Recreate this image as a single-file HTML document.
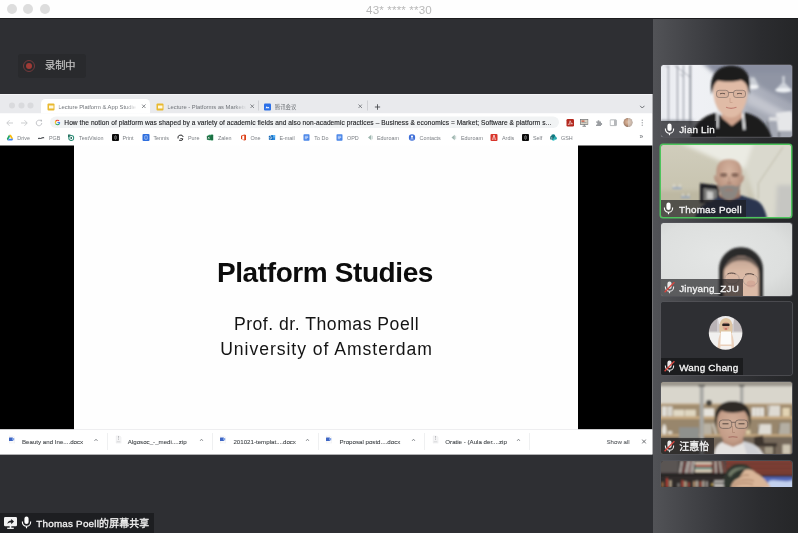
<!DOCTYPE html>
<html lang="zh">
<head>
<meta charset="utf-8">
<title>Meeting</title>
<style>
html,body{margin:0;padding:0;}
body{width:798px;height:533px;overflow:hidden;position:relative;background:#2e2f33;font-family:"Liberation Sans","Noto Sans CJK SC",sans-serif;}
#root{position:absolute;left:0;top:0;width:798px;height:533px;will-change:transform;}
.abs{position:absolute;}
#titlebar{left:0;top:0;width:798px;height:18px;background:#fefefe;border-bottom:1px solid #1c1c1e;box-sizing:content-box;}
#titlebar .dot{position:absolute;top:4px;width:10px;height:10px;border-radius:50%;background:#dddddd;}
#titletext{left:0;width:798px;top:3px;text-align:center;font-size:11.6px;line-height:13px;color:#b9b9b9;letter-spacing:0.15px;}
#main{left:0;top:19px;width:652.5px;height:514px;background:#2e2f33;}
#panel{left:652.5px;top:19px;width:145.5px;height:514px;background:linear-gradient(to right,#525357 0%,#434448 25%,#35363a 50%,#2b2c2f 75%,#252628 100%);}
#rec{left:17.5px;top:53.5px;width:68.5px;height:24px;border-radius:3px;background:#292a2d;}
#rec .ring{position:absolute;left:5.5px;top:6.4px;width:10px;height:10px;border-radius:50%;border:1px solid #74393b;}
#rec .ring i{position:absolute;left:1.8px;top:1.8px;width:6.4px;height:6.4px;border-radius:50%;background:#a03b36;}
#rec span{position:absolute;left:27.5px;top:5px;font-size:10.2px;line-height:14px;color:#c4c4c4;white-space:nowrap;-webkit-text-stroke:0.2px #c4c4c4;}

/* chrome window : authored at 2x then scaled */
#chrome{left:0;top:94px;width:1305px;height:721px;transform:scale(.5);transform-origin:0 0;background:#fff;overflow:hidden;font-family:"Liberation Sans","Noto Sans CJK SC",sans-serif;}
#chrome .tabstrip,#chrome .toolbar,#chrome .bm,#chrome .dl{filter:blur(0.55px);}
#chrome .tabstrip{position:absolute;left:0;top:0;width:1305px;height:39px;background:linear-gradient(#f4f4f6 0,#f4f4f6 2px,#e9eaed 2px);}
#chrome .tl{position:absolute;top:17px;width:12px;height:12px;border-radius:50%;background:#d9dadd;}
#chrome .tab{position:absolute;top:10px;height:29px;}
#chrome .tab.active{background:#fff;border-radius:9px 9px 0 0;}
#chrome .tab .fav{position:absolute;top:9px;left:13px;width:14px;height:14px;border-radius:2px;}
#chrome .tab .tt{position:absolute;top:8px;left:34.6px;font-size:11.6px;line-height:16px;color:#6f7378;white-space:nowrap;overflow:hidden;}
#chrome .tab .tt.fade{-webkit-mask-image:linear-gradient(to right,#000 0,#000 84%,transparent 100%);mask-image:linear-gradient(to right,#000 0,#000 84%,transparent 100%);}
#chrome .tab .x{position:absolute;top:8px;font-size:15px;line-height:16px;color:#5f6368;}
#chrome .toolbar{position:absolute;left:0;top:39px;width:1305px;height:33px;background:#fff;}
#chrome .omni{position:absolute;left:100px;top:6px;width:1018px;height:23px;border-radius:12px;background:#f1f3f4;}
#chrome .omni .url{position:absolute;left:28.6px;top:4px;font-size:13.2px;line-height:17px;color:#202124;white-space:nowrap;letter-spacing:0.14px;-webkit-text-stroke:0.22px #202124;}
#chrome .bm{position:absolute;left:0;top:72px;width:1305px;height:31px;background:#fff;}
#chrome .bm .b{position:absolute;top:7px;height:16px;font-size:10.8px;line-height:16px;color:#7a7e83;white-space:nowrap;}
#chrome .bm .ic{position:absolute;top:8px;width:14px;height:14px;border-radius:2px;}
#chrome .content{position:absolute;left:0;top:103px;width:1305px;height:568px;background:linear-gradient(to right,#000 0,#000 149px,#fefefe 149px,#fefefe 1156px,#000 1156px,#000 100%);}
#chrome .slide{position:absolute;left:149px;top:0;width:1007px;height:568px;background:#fefefe;}
#chrome .dl{position:absolute;left:0;top:671px;width:1305px;height:50px;background:#fff;border-top:1px solid #dcdde0;box-sizing:border-box;}
#chrome .dl .t{position:absolute;top:15px;font-size:12.3px;line-height:16px;color:#3f4347;-webkit-text-stroke:0.15px #3f4347;white-space:nowrap;}
#chrome .dl .sep{position:absolute;top:6px;width:1px;height:34px;background:#dfe0e3;}
#chrome .dl .car{position:absolute;top:16px;width:8px;height:8px;}
#chrome .dl .fi{position:absolute;top:11px;width:12px;height:16px;}

.h1{left:73.5px;width:503px;top:255px;text-align:center;font-weight:bold;font-size:28px;line-height:36px;color:#0c0c0c;letter-spacing:-0.4px;white-space:nowrap;}
.h2{left:75px;width:503px;text-align:center;font-size:17.6px;line-height:24px;color:#141414;white-space:nowrap;}

#share{left:0;top:513px;width:153.5px;height:20px;background:#1d1e21;}
#share span{position:absolute;left:36.3px;top:2.8px;font-size:9.9px;line-height:15px;letter-spacing:0.2px;color:#f2f2f2;white-space:nowrap;-webkit-text-stroke:0.3px #f2f2f2;}

.tile{position:absolute;left:661px;width:130.6px;height:72.6px;border-radius:2.5px;overflow:hidden;background:#303135;box-shadow:0 0 0 0.8px #55565b;}
.tile svg.ph{position:absolute;left:0;top:0;width:131px;height:73px;display:block;}
.tile .lab{position:absolute;left:0;bottom:0;height:16.2px;background:rgba(28,28,30,.66);}
.tile .lab span{position:absolute;left:18.2px;top:1.2px;font-size:9.9px;line-height:15px;letter-spacing:0.2px;color:#f6f6f6;white-space:nowrap;-webkit-text-stroke:0.3px #f6f6f6;}
.tile .lab svg{position:absolute;left:2.6px;top:2px;width:11px;height:13px;}
</style>
</head>
<body>
<div id="root">
<div id="titlebar" class="abs">
  <div class="dot" style="left:6.7px"></div><div class="dot" style="left:23.3px"></div><div class="dot" style="left:40px"></div>
</div>
<div id="titletext" class="abs">43* **** **30</div>
<div id="main" class="abs"></div>
<div id="panel" class="abs"></div>

<div id="rec" class="abs"><div class="ring"><i></i></div><span>录制中</span></div>

<!-- CHROME -->
<div id="chrome" class="abs">
  <div class="tabstrip">
    <div class="tl" style="left:18px"></div><div class="tl" style="left:37px"></div><div class="tl" style="left:55px"></div>
    <div class="tab active" style="left:82px;width:218px"><div class="fav" style="background:#e9b92e"><div style="position:absolute;left:2.5px;top:4px;width:9px;height:6px;background:#fff8e0"></div></div><div class="tt fade" style="width:158px">Lecture Platform &amp; App Studie</div><svg style="position:absolute;left:201px;top:9.5px;width:9px;height:9px" viewBox="0 0 10 10"><path d="M1 1L9 9M9 1L1 9" stroke="#5f6368" stroke-width="1.6" fill="none"/></svg></div>
    <div class="tab" style="left:300px;width:217px"><div class="fav" style="background:#e9b92e"><div style="position:absolute;left:2.5px;top:4px;width:9px;height:6px;background:#fff8e0"></div></div><div class="tt fade" style="width:158px">Lecture - Platforms as Markets</div><svg style="position:absolute;left:199.5px;top:9.5px;width:9px;height:9px" viewBox="0 0 10 10"><path d="M1 1L9 9M9 1L1 9" stroke="#5f6368" stroke-width="1.6" fill="none"/></svg></div>
    <div style="position:absolute;left:517px;top:13px;width:1px;height:20px;background:#b5b7bb"></div>
    <div class="tab" style="left:517px;width:217px"><div class="fav" style="background:#2a6fe8;left:11px"><svg viewBox="0 0 14 14" style="position:absolute;left:0;top:0;width:14px;height:14px"><path d="M3 9.5L5.5 5.5L7.5 8L9 6.5L11 9.5Z" fill="#fff"/></svg></div><div class="tt" style="left:32.5px;font-size:10.8px">腾讯会议</div><svg style="position:absolute;left:199px;top:9.5px;width:9px;height:9px" viewBox="0 0 10 10"><path d="M1 1L9 9M9 1L1 9" stroke="#5f6368" stroke-width="1.6" fill="none"/></svg></div>
    <div style="position:absolute;left:734px;top:13px;width:1px;height:20px;background:#b5b7bb"></div>
    <svg style="position:absolute;left:749px;top:20px;width:12px;height:12px" viewBox="0 0 12 12"><path d="M6 0.5V11.5M0.5 6H11.5" stroke="#4a4d51" stroke-width="1.8" fill="none"/></svg>
    <svg style="position:absolute;left:1279px;top:22px;width:11px;height:8px" viewBox="0 0 11 8"><path d="M1 1.5L5.5 6L10 1.5" stroke="#5f6368" stroke-width="1.8" fill="none"/></svg>
  </div>
  <div class="toolbar">
    <svg style="position:absolute;left:12px;top:12px;width:15px;height:14px" viewBox="0 0 15 14"><path d="M14 7H2M7 1.5L1.5 7L7 12.5" stroke="#c3c5c8" stroke-width="1.7" fill="none"/></svg>
    <svg style="position:absolute;left:41px;top:12px;width:15px;height:14px" viewBox="0 0 15 14"><path d="M1 7H13M8 1.5L13.5 7L8 12.5" stroke="#c3c5c8" stroke-width="1.7" fill="none"/></svg>
    <svg style="position:absolute;left:70px;top:11px;width:16px;height:16px" viewBox="0 0 16 16"><path d="M13.5 8A5.5 5.5 0 1 1 11.6 3.8" stroke="#b9bbbf" stroke-width="1.7" fill="none"/><path d="M9.5 1.5H14V6Z" fill="#b9bbbf"/></svg>
    <div class="omni"><svg style="position:absolute;left:9px;top:5.5px;width:12px;height:12px" viewBox="0 0 12 12"><circle cx="6" cy="6" r="4.4" fill="none" stroke="#ea4335" stroke-width="2.2" stroke-dasharray="7.2 30" transform="rotate(-150 6 6)"/><circle cx="6" cy="6" r="4.4" fill="none" stroke="#fbbc05" stroke-width="2.2" stroke-dasharray="5.5 30" transform="rotate(150 6 6)"/><circle cx="6" cy="6" r="4.4" fill="none" stroke="#34a853" stroke-width="2.2" stroke-dasharray="7.5 30" transform="rotate(40 6 6)"/><path d="M6 5H10.9V7.2H6Z" fill="#4285f4"/><circle cx="6" cy="6" r="4.4" fill="none" stroke="#4285f4" stroke-width="2.2" stroke-dasharray="4 30" transform="rotate(-10 6 6)"/></svg><div class="url">How the notion of platform was shaped by a variety of academic fields and also non-academic practices – Business &amp; economics = Market; Software &amp; platform s...</div></div>
    <div style="position:absolute;left:1133px;top:11px;width:15px;height:15px;border-radius:2.5px;background:#b4291f"><svg viewBox="0 0 15 15" style="position:absolute;left:0;top:0;width:15px;height:15px"><path d="M3.5 11C5.5 9.5 7 6.5 7.2 3.5C7.6 6.5 9.5 9 12 9.5C9 9.3 5.5 10 3.5 11Z" stroke="#fff" stroke-width="1.2" fill="none"/></svg></div>
    <svg style="position:absolute;left:1160px;top:10px;width:17px;height:17px" viewBox="0 0 17 17"><rect x="1" y="2" width="15" height="10" fill="#d9d3c5" stroke="#6f7174" stroke-width="1.4"/><rect x="3" y="4" width="6" height="2.5" fill="#c9563f"/><rect x="3" y="7.5" width="10" height="1.2" fill="#8a8c8f"/><path d="M8.5 12V15M5 15.5H12" stroke="#5f6164" stroke-width="1.5"/></svg>
    <svg style="position:absolute;left:1190px;top:11px;width:15px;height:15px" viewBox="0 0 15 15"><path d="M2 5H5.2A1.9 1.9 0 1 1 8.8 5H12V8.2A1.9 1.9 0 1 1 12 11.8V14H2V11A1.9 1.9 0 1 0 2 7.5Z" fill="#9a9da1"/></svg>
    <svg style="position:absolute;left:1219px;top:11px;width:15px;height:15px" viewBox="0 0 15 15"><rect x="1.2" y="1.7" width="12.6" height="11.6" rx="1" fill="#fff" stroke="#9a9da1" stroke-width="1.5"/><rect x="9" y="2" width="4.5" height="11" fill="#b5b7ba"/></svg>
    <div style="position:absolute;left:1247px;top:9px;width:18px;height:18px;border-radius:50%;background:radial-gradient(circle at 45% 45%,#d9b9a0 0,#c79d82 35%,#8b6f5e 70%,#6b5a50 100%);overflow:hidden"><div style="position:absolute;left:9px;top:0;width:9px;height:18px;background:rgba(230,225,220,.55)"></div></div>
    <svg style="position:absolute;left:1282px;top:11px;width:5px;height:15px" viewBox="0 0 5 15"><circle cx="2.5" cy="2.5" r="1.4" fill="#a0a3a7"/><circle cx="2.5" cy="7.5" r="1.4" fill="#a0a3a7"/><circle cx="2.5" cy="12.5" r="1.4" fill="#a0a3a7"/></svg>
  </div>
  <div class="bm">
    <svg class="ic" style="left:13px;width:14px;height:14px;border-radius:0" viewBox="0 0 14 14"><path d="M5 1.5H9L13.5 9.5H9.5Z" fill="#fbbc05"/><path d="M5 1.5L0.5 9.5L2.5 12.8L7 5Z" fill="#1fa463"/><path d="M4.6 9.5H13.5L11.5 12.8H2.5Z" fill="#4285f4"/></svg><div class="b" style="left:34.6px">Drive</div>
    <svg class="ic" style="left:75px;width:14px;height:14px;border-radius:0" viewBox="0 0 14 14"><path d="M1 8.5C3 6 5 9 7 7.5S11 5.5 13.5 6.5V9C11 8 9 9.5 7 10S3 9 1 10.5Z" fill="#55585c"/></svg><div class="b" style="left:97.8px">PGB</div>
    <svg class="ic" style="left:134.5px;width:14px;height:14px;border-radius:0" viewBox="0 0 14 14"><circle cx="7.5" cy="8" r="5" fill="none" stroke="#2c8f78" stroke-width="2.2"/><circle cx="7.5" cy="8" r="1.8" fill="#1e5f52"/><path d="M1 1H6V3.5H3.5V6H1Z" fill="#256e5e"/></svg><div class="b" style="left:158px">TestVision</div>
    <div class="ic" style="left:224px;background:#0b0b0b"><div style="position:absolute;left:5px;top:3px;width:4px;height:8px;border:1px solid #ddd;border-radius:2px;box-sizing:border-box"></div></div><div class="b" style="left:245px">Print</div>
    <div class="ic" style="left:284.8px;background:#2f6fde"><div style="position:absolute;left:4px;top:3px;width:6px;height:8px;border:1.3px solid #e8f0ff;box-sizing:border-box;border-radius:1px"></div></div><div class="b" style="left:306.8px">Tennis</div>
    <svg class="ic" style="left:354px;width:14px;height:14px;border-radius:0" viewBox="0 0 14 14"><path d="M2 9A5.2 5.2 0 0 1 12.5 6" stroke="#2b2c2e" stroke-width="2" fill="none"/><path d="M4 11.5A4 4 0 0 0 11.5 9.5H6.5" stroke="#2b2c2e" stroke-width="2" fill="none"/></svg><div class="b" style="left:376px">Pure</div>
    <svg class="ic" style="left:413px;width:14px;height:14px;border-radius:0" viewBox="0 0 14 14"><rect x="4" y="1.5" width="9.5" height="11" rx="1" fill="#2e9e62"/><rect x="9" y="1.5" width="4.5" height="11" fill="#1d7044"/><rect x="0.5" y="3.5" width="8" height="8" rx="1" fill="#17683d"/><path d="M2.8 5.5L6.2 9.7M6.2 5.5L2.8 9.7" stroke="#fff" stroke-width="1.2"/></svg><div class="b" style="left:436px">Zalen</div>
    <svg class="ic" style="left:479.5px;width:13px;height:14px;border-radius:0" viewBox="0 0 13 14"><path d="M2 3.5L8.5 1L12 2V12L8.5 13L2 10.5L8.5 11.3V3L4.5 4V9.3L2 10.5Z" fill="#dc3e15"/></svg><div class="b" style="left:500.8px">One</div>
    <svg class="ic" style="left:536.5px;width:14px;height:14px;border-radius:0" viewBox="0 0 14 14"><rect x="5" y="2" width="8.5" height="10" rx="1" fill="#2a8ae0"/><rect x="9" y="2" width="4.5" height="5" fill="#5db3f5"/><rect x="0.5" y="3.5" width="8" height="8" rx="1" fill="#0f64b5"/><circle cx="4.5" cy="7.5" r="2.1" fill="none" stroke="#fff" stroke-width="1.2"/></svg><div class="b" style="left:558.8px">E-mail</div>
    <svg class="ic" style="left:606px;width:14px;height:14px;border-radius:0" viewBox="0 0 14 14"><rect x="1" y="0.5" width="12" height="13" rx="1.6" fill="#4a86e8"/><path d="M3.6 4.6H10.4M3.6 7H10.4M3.6 9.4H8.4" stroke="#e8f0fe" stroke-width="1.3"/></svg><div class="b" style="left:628.6px">To Do</div>
    <svg class="ic" style="left:672px;width:14px;height:14px;border-radius:0" viewBox="0 0 14 14"><rect x="1" y="0.5" width="12" height="13" rx="1.6" fill="#4a86e8"/><path d="M3.6 4.6H10.4M3.6 7H10.4M3.6 9.4H8.4" stroke="#e8f0fe" stroke-width="1.3"/></svg><div class="b" style="left:694px">OPD</div>
    <svg class="ic" style="left:734px;width:12px;height:14px;border-radius:0" viewBox="0 0 12 14"><path d="M8.5 1.5L2 7L8.5 12.5Z" fill="#9fb7b0"/><path d="M10.5 3.5V10.5" stroke="#b8cac5" stroke-width="1.6"/></svg><div class="b" style="left:754px">Eduroam</div>
    <svg class="ic" style="left:817px;width:14px;height:14px;border-radius:0" viewBox="0 0 14 14"><circle cx="7" cy="7" r="6.5" fill="#3f6fd8"/><circle cx="7" cy="5.3" r="2.1" fill="#fff"/><path d="M3 10.6C3.8 8.4 10.2 8.4 11 10.6Z" fill="#fff"/></svg><div class="b" style="left:839px">Contacts</div>
    <svg class="ic" style="left:900.5px;width:12px;height:14px;border-radius:0" viewBox="0 0 12 14"><path d="M8.5 1.5L2 7L8.5 12.5Z" fill="#9fb7b0"/><path d="M10.5 3.5V10.5" stroke="#b8cac5" stroke-width="1.6"/></svg><div class="b" style="left:922px">Eduroam</div>
    <div class="ic" style="left:981.4px;background:#d8352b"><svg viewBox="0 0 14 14" style="position:absolute;left:0;top:0;width:14px;height:14px"><path d="M3.5 12L7 2L10.5 12M7 2V12" stroke="#fff" stroke-width="1.1" fill="none"/></svg></div><div class="b" style="left:1004px">Ardis</div>
    <div class="ic" style="left:1043.6px;background:#0b0b0b"><div style="position:absolute;left:5px;top:3px;width:4px;height:8px;border:1px solid #ddd;border-radius:2px;box-sizing:border-box"></div></div><div class="b" style="left:1066px">Self</div>
    <svg class="ic" style="left:1099.5px;width:14px;height:14px;border-radius:0" viewBox="0 0 14 14"><circle cx="6.5" cy="4.8" r="4.3" fill="#0f7c84"/><circle cx="10.3" cy="8.3" r="3.4" fill="#2aa7ad"/><circle cx="6.8" cy="10.8" r="2.8" fill="#3cc6c9"/><rect x="0.5" y="4.5" width="6.5" height="6.5" rx="1" fill="#08626a"/><path d="M5 6.3H3.3C2.4 6.3 2.4 7.7 3.3 7.7H4.2C5.1 7.7 5.1 9.2 4.2 9.2H2.4" stroke="#fff" stroke-width="0.9" fill="none"/></svg><div class="b" style="left:1122px">GSH</div>
    <div class="b" style="left:1279px;color:#5f6368;font-size:13px;top:6px">»</div>
  </div>
  <div class="content"></div>
  <div class="dl">
    <svg class="fi" style="left:18px" viewBox="0 0 12 16"><path d="M1 0.5H8L11.5 4V15.5H1Z" fill="#fbfbfc" stroke="#e3e4e7" stroke-width="0.8"/><rect x="0" y="4" width="8" height="7" rx="1" fill="#3e66c4"/><rect x="6" y="5.2" width="4.5" height="4.6" fill="#7fa1e6"/></svg><div class="t" style="left:44px">Beauty and Ine....docx</div><svg class="car" style="left:188px" viewBox="0 0 10 8"><path d="M1 6.5L5 2L9 6.5" stroke="#5f6368" stroke-width="1.7" fill="none"/></svg><div class="sep" style="left:214.6px"></div>
    <svg class="fi" style="left:231px" viewBox="0 0 12 16"><path d="M1 0.5H8L11.5 4V15.5H1Z" fill="#f4f4f5" stroke="#e0e1e4" stroke-width="0.8"/><path d="M6 1V9" stroke="#9a9ca0" stroke-width="1.6" stroke-dasharray="1.6 1.2"/><rect x="2.5" y="12" width="7" height="1.4" fill="#c9cacd"/></svg><div class="t" style="left:255.6px">Algosoc_-_medi....zip</div><svg class="car" style="left:399px" viewBox="0 0 10 8"><path d="M1 6.5L5 2L9 6.5" stroke="#5f6368" stroke-width="1.7" fill="none"/></svg><div class="sep" style="left:425.2px"></div>
    <svg class="fi" style="left:440px" viewBox="0 0 12 16"><path d="M1 0.5H8L11.5 4V15.5H1Z" fill="#fbfbfc" stroke="#e3e4e7" stroke-width="0.8"/><rect x="0" y="4" width="8" height="7" rx="1" fill="#3e66c4"/><rect x="6" y="5.2" width="4.5" height="4.6" fill="#7fa1e6"/></svg><div class="t" style="left:466.8px">201021-templat....docx</div><svg class="car" style="left:610.6px" viewBox="0 0 10 8"><path d="M1 6.5L5 2L9 6.5" stroke="#5f6368" stroke-width="1.7" fill="none"/></svg><div class="sep" style="left:637.2px"></div>
    <svg class="fi" style="left:652px" viewBox="0 0 12 16"><path d="M1 0.5H8L11.5 4V15.5H1Z" fill="#fbfbfc" stroke="#e3e4e7" stroke-width="0.8"/><rect x="0" y="4" width="8" height="7" rx="1" fill="#3e66c4"/><rect x="6" y="5.2" width="4.5" height="4.6" fill="#7fa1e6"/></svg><div class="t" style="left:679px">Proposal postd....docx</div><svg class="car" style="left:823px" viewBox="0 0 10 8"><path d="M1 6.5L5 2L9 6.5" stroke="#5f6368" stroke-width="1.7" fill="none"/></svg><div class="sep" style="left:849px"></div>
    <svg class="fi" style="left:865px" viewBox="0 0 12 16"><path d="M1 0.5H8L11.5 4V15.5H1Z" fill="#f4f4f5" stroke="#e0e1e4" stroke-width="0.8"/><path d="M6 1V9" stroke="#9a9ca0" stroke-width="1.6" stroke-dasharray="1.6 1.2"/><rect x="2.5" y="12" width="7" height="1.4" fill="#c9cacd"/></svg><div class="t" style="left:890.6px">Oratie - (Aula der....zip</div><svg class="car" style="left:1033.4px" viewBox="0 0 10 8"><path d="M1 6.5L5 2L9 6.5" stroke="#5f6368" stroke-width="1.7" fill="none"/></svg><div class="sep" style="left:1059.2px"></div>
    <div class="t" style="left:1213px;color:#6a6d71">Show all</div>
    <svg style="position:absolute;left:1283px;top:17.5px;width:10px;height:10px" viewBox="0 0 10 10"><path d="M1 1L9 9M9 1L1 9" stroke="#55585c" stroke-width="1.7" fill="none"/></svg>
  </div>
</div>

<div class="abs h1">Platform Studies</div>
<div class="abs h2" style="top:312px;letter-spacing:0.52px">Prof. dr. Thomas Poell</div>
<div class="abs h2" style="top:337px;letter-spacing:0.96px">University of Amsterdam</div>

<div id="share" class="abs">
  <svg style="position:absolute;left:3.8px;top:3.6px;width:13px;height:12px" viewBox="0 0 13 12"><rect x="0" y="0" width="13" height="9.2" rx="1.2" fill="#f2f2f2"/><path d="M3.4 7C3.8 4.6 5.4 3.6 7.2 3.6V2L10 4.6L7.2 7.2V5.6C5.6 5.5 4.4 5.9 3.4 7Z" fill="#1d1e21"/><path d="M3.2 11.3H9.8" stroke="#f2f2f2" stroke-width="1.3"/><path d="M6.5 9V11" stroke="#f2f2f2" stroke-width="1.6"/></svg>
  <svg style="position:absolute;left:20.6px;top:3px;width:11px;height:13px" viewBox="0 0 11 13"><rect x="3.4" y="0.6" width="4.2" height="7.4" rx="2.1" fill="#fff"/><path d="M1.4 5.6V6.2A4.1 4.1 0 0 0 9.6 6.2V5.6" stroke="#fff" stroke-width="1.1" fill="none"/><path d="M5.5 10.3V12.3" stroke="#fff" stroke-width="1.2"/></svg>
  <span>Thomas Poell的屏幕共享</span>
</div>

<div class="tile" style="top:64.5px;"><svg class="ph" viewBox="0 0 131 73" preserveAspectRatio="none">
<defs><filter id="b1" x="-5%" y="-5%" width="110%" height="110%"><feGaussianBlur stdDeviation="0.9"/></filter>
<filter id="b2" x="-10%" y="-10%" width="120%" height="120%"><feGaussianBlur stdDeviation="2"/></filter>
<filter id="b3" x="-5%" y="-5%" width="110%" height="110%"><feGaussianBlur stdDeviation="0.5"/></filter>
<linearGradient id="w1" x1="0" y1="0" x2="1" y2="0"><stop offset="0" stop-color="#e9ebf0"/><stop offset=".2" stop-color="#f0f1f5"/><stop offset=".42" stop-color="#eef0f3"/><stop offset=".55" stop-color="#b4b8c3"/><stop offset="1" stop-color="#a3a7b4"/></linearGradient></defs>
<rect width="131" height="73" fill="url(#w1)"/>
<g filter="url(#b2)">
<path d="M40 -3H134V10L90 12L54 9Z" fill="#8a8fa0"/>
<path d="M86 8H134V40L100 22Z" fill="#9095a4"/>
<path d="M86 26L134 52V62L86 38Z" fill="#c2c5ce"/>
<path d="M86 42L134 64V76H86Z" fill="#a4a8b3"/>
<path d="M-3 56H34V76H-3Z" fill="#b6b9c1"/>
</g>
<g filter="url(#b1)">
<rect x="6.9" y="0" width="1" height="58" fill="#8a8e98"/><rect x="15.9" y="0" width="1" height="58" fill="#8a8e98"/><rect x="22" y="0" width="1" height="58" fill="#9095a0"/><rect x="28.6" y="0" width="1.5" height="60" fill="#7c808a"/><path d="M4 0L8 3M13 0L29 12M19 9L23 12" stroke="#7c808a" stroke-width="0.6" fill="none"/>

<rect x="0" y="55.5" width="31" height="1.5" fill="#858993"/>
<path d="M90 12.5L86 21H97.5L93.5 12.5Z" fill="#c9cdd4"/><ellipse cx="91.7" cy="22" rx="6" ry="2.2" fill="#f1f3f5"/>
<rect x="121.3" y="11" width="2.4" height="9" fill="#cfd3da"/><path d="M121 18L114 25H131L124 18Z" fill="#cdd2d9"/><ellipse cx="122.5" cy="25.3" rx="8.3" ry="2.2" fill="#eef1f4"/>
<path d="M115 48L130 46L131 48V66H117Z" fill="#e6e7e9"/><path d="M108 52H118V56H108Z" fill="#dcdde0"/>
<path d="M106 56L110 73M118 66V73" stroke="#55575e" stroke-width="1"/>
<!-- body -->
<path d="M29 73C34 58 41 51 56 47.5L70 60L84 47.5C98 51 106 58 111 73Z" fill="#1b1c1f"/>
<path d="M55.3 47.5L57.6 47L57.4 63.5L55.5 62.5Z" fill="#ecedef"/><path d="M80.6 48L83 48.5L84.5 64.5L82.4 65Z" fill="#ecedef"/>
<!-- neck + face -->
<path d="M61 44H81V53L71 61L61 53Z" fill="#cfa38d"/>
<path d="M52.5 27C52 14 58 10 70 10S87 14 86.5 27C86.5 40 80 52.5 70 52.5S52.5 40 52.5 27Z" fill="#e0bba6"/>
<path d="M51 30C47 10 57 0.8 70 0.8C84 0.8 92 10 88 30C87.5 22 85 17 80 15C74 17 62 17 57 15.5C53 18 52 23 51 30Z" fill="#1a1a1d"/>
</g>
<g filter="url(#b3)" opacity=".8">
<rect x="55.5" y="25.3" width="12" height="7.2" rx="2.6" fill="#d6b19d" stroke="#6b5d59" stroke-width="0.7"/><rect x="72.5" y="25.3" width="12" height="7.2" rx="2.6" fill="#d6b19d" stroke="#6b5d59" stroke-width="0.7"/>
<path d="M67.5 27.5H72.5" stroke="#5e514e" stroke-width="0.8"/>
<path d="M59 28.9C60.5 28.2 62.5 28.2 64 28.9M76 28.9C77.5 28.2 79.5 28.2 81 28.9" stroke="#3a2f2d" stroke-width="1" fill="none"/>
<path d="M65 42.3C68 43.6 72 43.6 75.5 42.3" stroke="#b97368" stroke-width="1.1" fill="none"/>
<path d="M69 33V37.5H71.5" stroke="#c39a86" stroke-width="0.8" fill="none"/>
</g>
</svg><div class="lab" style="width:55px;"><svg viewBox="0 0 11 13"><rect x="3.4" y="0.6" width="4.2" height="7.4" rx="2.1" fill="#fff"/><path d="M1.4 5.6V6.2A4.1 4.1 0 0 0 9.6 6.2V5.6" stroke="#fff" stroke-width="1.1" fill="none"/><path d="M5.5 10.3V12.3" stroke="#fff" stroke-width="1.2"/></svg><span>Jian Lin</span></div></div>
<div class="tile" style="top:144.6px;box-shadow:0 0 0 1.5px #4dc45c;border-radius:2px;left:660.9px;width:130.1px;height:72px;"><svg class="ph" viewBox="0 0 131 73" preserveAspectRatio="none">
<defs><linearGradient id="w2" x1="0" y1="0" x2="0" y2="1"><stop offset="0" stop-color="#d0cdbc"/><stop offset=".6" stop-color="#c8c4b0"/><stop offset="1" stop-color="#bab59f"/></linearGradient>
<radialGradient id="h2" cx=".5" cy=".3" r=".7"><stop offset="0" stop-color="#d6b4a0"/><stop offset=".6" stop-color="#c09a86"/><stop offset="1" stop-color="#a37f6d"/></radialGradient></defs>
<rect width="131" height="73" fill="url(#w2)"/>
<g filter="url(#b2)">
<path d="M17 -3H93L84 24L59 16Z" fill="#ebebe3"/>
<path d="M93 -3H134V76H100L84 24Z" fill="#dad9ce"/>
<path d="M59 16L84 24L92 76H50Z" fill="#d1cebf"/>
<path d="M116 40H134V76H114Z" fill="#c6c6c2"/>
<path d="M-3 46H40V76H-3Z" fill="#bdb8a2"/>
</g>
<g filter="url(#b1)">
<path d="M97.3 54V38.5L122 2" stroke="#aaa48f" stroke-width="0.6" fill="none"/>
<path d="M39 38.3L58 40.5V58H39Z" fill="#1f1f20"/><path d="M42.5 43L56 44.5V56H42.5Z" fill="#7b7b7a"/><path d="M46 46L52 47V54H46Z" fill="#c9c9c7"/>
<rect x="11.5" y="42.3" width="9" height="1.6" fill="#8ea3c4"/><path d="M13 39.5V42M19 39.5V42" stroke="#f2f2f0" stroke-width="1"/>
<rect x="20" y="51.3" width="9" height="1.6" fill="#8ea3c4"/><path d="M22 48.5V51M27.5 48.5V51" stroke="#eeeeec" stroke-width="1"/>
<!-- shirt -->
<path d="M34 73C36 64 42 59 50 56L58 51.5L68 55.5L79 50L96 55.5C102 59 104.5 66 106 73Z" fill="#2a3650"/>
<path d="M58 51.5L68 58L79 50L76 48H60Z" fill="#1e2438"/>
<!-- neck, head -->
<path d="M59 44H79V52L68.5 56L59 52Z" fill="#9a7665"/>
<path d="M55.3 28C55.3 18 60 14.3 68 14.3S80.8 18 80.8 28C81 37 79 45 76 50C73 54.5 71 55.3 68 55.3S63 54.5 60 50C57 45 55.3 37 55.3 28Z" fill="url(#h2)"/>
<path d="M54 30.5C53.3 33 54.3 37 56 37.5ZM82 30.5C82.8 33 81.8 37 80 37.5Z" fill="#b38b78" stroke="#b38b78" stroke-width="1"/>
<path d="M56.8 39C58 44 59.5 49.5 62 52.5C64.5 55.3 71.5 55.3 74 52.5C76.5 49.5 78.3 44 79.3 39C77.5 42 75 41.5 72.5 40.5C70 39.8 66 39.8 63.5 40.5C61 41.5 58.5 42 56.8 39Z" fill="#8b8681"/>
<path d="M64 45.5C66.5 44.8 69.5 44.8 72 45.5" stroke="#a27a6c" stroke-width="1.2" fill="none"/>
</g>
<g filter="url(#b1)">
<ellipse cx="62.6" cy="30" rx="3.6" ry="1.9" fill="#6b4f43" opacity=".75"/><ellipse cx="74" cy="30" rx="3.6" ry="1.9" fill="#6b4f43" opacity=".75"/>
<path d="M68.3 31.5V37" stroke="#a8826f" stroke-width="1.2" fill="none" opacity=".7"/>
<ellipse cx="68.3" cy="38.3" rx="2.6" ry="1.2" fill="#a07868" opacity=".7"/>
</g>
</svg><div class="lab" style="width:85.5px;"><svg viewBox="0 0 11 13"><rect x="3.4" y="0.6" width="4.2" height="7.4" rx="2.1" fill="#fff"/><path d="M1.4 5.6V6.2A4.1 4.1 0 0 0 9.6 6.2V5.6" stroke="#fff" stroke-width="1.1" fill="none"/><path d="M5.5 10.3V12.3" stroke="#fff" stroke-width="1.2"/></svg><span>Thomas Poell</span></div></div>
<div class="tile" style="top:223px;"><svg class="ph" viewBox="0 0 131 73" preserveAspectRatio="none">
<defs><radialGradient id="w3" cx=".45" cy=".45" r=".85"><stop offset="0" stop-color="#e4e6e5"/><stop offset=".6" stop-color="#dddfde"/><stop offset="1" stop-color="#c9cbca"/></radialGradient>
<linearGradient id="f3" x1="0" y1="0" x2="0" y2="1"><stop offset="0" stop-color="#bfa090"/><stop offset=".35" stop-color="#d9b9a5"/><stop offset="1" stop-color="#ddbba8"/></linearGradient></defs>
<rect width="131" height="73" fill="url(#w3)"/>
<g filter="url(#b1)">
<path d="M58 76V46.3C58 34.1 67.8 24.3 80 24.3C92.2 24.3 102 34.1 102 46.3V76Z" fill="#2b2b2c"/>
<path d="M62.8 76V51C62.8 41 70.6 33 80.3 33C90 33 97.8 41 97.8 51V76Z" fill="url(#f3)"/>
<path d="M64 46C66 38 72 33.5 80.3 33.5C88.5 33.5 94.5 38 96.5 46C92 39.5 87 37.5 80.3 37.5C73.5 37.5 68.5 39.5 64 46Z" fill="#3a3533" opacity=".65"/>
</g>
<g filter="url(#b3)">
<ellipse cx="71" cy="55.5" rx="7.2" ry="5.6" fill="none" stroke="#a9978d" stroke-width="0.8"/><ellipse cx="89.5" cy="57" rx="7.4" ry="6" fill="none" stroke="#a9978d" stroke-width="0.8"/>
<path d="M66.5 51C69 49.8 72 49.8 74.5 51M84 51.5C86.5 50.3 90 50.3 93 51.8" stroke="#5b4a42" stroke-width="1" fill="none"/>
<ellipse cx="90" cy="61" rx="4.5" ry="3.6" fill="#cf9f90" opacity=".6"/>
</g>
</svg><div class="lab" style="width:82px;"><svg viewBox="0 0 11 13"><rect x="3.4" y="0.6" width="4.2" height="7.4" rx="2.1" fill="#e9e9e9"/><path d="M1.4 5.6V6.2A4.1 4.1 0 0 0 9.6 6.2V5.6" stroke="#e9e9e9" stroke-width="1.1" fill="none"/><path d="M5.5 10.3V12.3" stroke="#e9e9e9" stroke-width="1.2"/><path d="M0.6 11.2L10.4 1.2" stroke="#d8453e" stroke-width="1.3"/></svg><span>Jinyang_ZJU</span></div></div>
<div class="tile" style="top:302px;"><svg class="ph" viewBox="0 0 131 73" preserveAspectRatio="none">
<rect width="131" height="73" fill="#2e2f33"/>
<defs><clipPath id="av"><circle cx="64.6" cy="30.9" r="16.8"/></clipPath></defs>
<g clip-path="url(#av)"><g filter="url(#b3)">
<rect x="45" y="12" width="40" height="40" fill="#f1f0ef"/>
<rect x="45" y="12" width="40" height="18" fill="#cfcbce"/>
<path d="M56 12H74L72 22H58Z" fill="#eceaeb"/>
<rect x="45" y="17" width="11" height="13" fill="#b9b3b6"/><rect x="73" y="16" width="12" height="14" fill="#c1babc"/>
<rect x="45" y="29.5" width="40" height="1.2" fill="#dcd9d8"/>
<path d="M56.5 48C57 40 57.5 34 60 30H70C72.5 34 73 40 73 48Z" fill="#ead0bb"/>
<path d="M58.8 31C57.5 24 58.5 16.5 65 16C71.5 16.5 72.3 24 71 31Z" fill="#dfc5a2"/>
<ellipse cx="64.9" cy="24" rx="3.3" ry="4.3" fill="#dcaa92"/>
<rect x="61.2" y="21.6" width="7.4" height="2.5" rx="1.2" fill="#2b2424"/>
<rect x="63.8" y="26.5" width="2.2" height="0.9" fill="#b8413f"/>
<path d="M60 29.5H70L70.6 42.5H59.4Z" fill="#fcfcfb"/>
<path d="M59.6 44H70.4L71.5 52H58.5Z" fill="#f4f1ef"/>
</g></g>
</svg><div class="lab" style="width:82px;background:#1b1c1e;"><svg viewBox="0 0 11 13"><rect x="3.4" y="0.6" width="4.2" height="7.4" rx="2.1" fill="#e9e9e9"/><path d="M1.4 5.6V6.2A4.1 4.1 0 0 0 9.6 6.2V5.6" stroke="#e9e9e9" stroke-width="1.1" fill="none"/><path d="M5.5 10.3V12.3" stroke="#e9e9e9" stroke-width="1.2"/><path d="M0.6 11.2L10.4 1.2" stroke="#d8453e" stroke-width="1.3"/></svg><span>Wang Chang</span></div></div>
<div class="tile" style="top:381.5px;"><svg class="ph" viewBox="0 0 131 73" preserveAspectRatio="none">
<defs><radialGradient id="f5" cx=".5" cy=".45" r=".65"><stop offset="0" stop-color="#d2ae99"/><stop offset=".7" stop-color="#c49d88"/><stop offset="1" stop-color="#a88470"/></radialGradient></defs>
<rect width="131" height="73" fill="#9e8c72"/>
<g filter="url(#b1)">
<rect x="-2" y="-2" width="135" height="24" fill="#d9d6cc"/>
<rect x="-2" y="-2" width="135" height="6.3" fill="#9d988e"/>
<rect x="-2" y="21.6" width="135" height="1.6" fill="#b89d78"/>
<rect x="-2" y="23.2" width="135" height="11.2" fill="#a08c70"/>
<rect x="-2" y="34.3" width="135" height="2.9" fill="#c9ab82"/>
<rect x="-2" y="37.2" width="135" height="15" fill="#98866c"/>
<rect x="-2" y="52.2" width="135" height="2.6" fill="#c3a67e"/>
<rect x="-2" y="54.8" width="135" height="20" fill="#74685a"/>
<rect x="38.7" y="2.5" width="4" height="72" fill="#a9a9a5"/><rect x="37.5" y="2.5" width="6.4" height="2.5" fill="#6f6d68"/>
<rect x="79" y="2.5" width="3.4" height="30" fill="#a9a9a5"/><rect x="78" y="2.5" width="5.4" height="2.5" fill="#6f6d68"/>
<rect x="0.7" y="24.3" width="5" height="10" fill="#e2dfd8"/><rect x="6.3" y="24.3" width="5.2" height="10" fill="#d8d5ce"/>
<rect x="12.3" y="27.7" width="10.7" height="6.6" fill="#e1d9c5"/><rect x="23.6" y="27.7" width="11.2" height="6.6" fill="#dfd6c0"/>
<rect x="42.7" y="26.5" width="10.3" height="7.8" fill="#e6e3dc"/><circle cx="48" cy="20.8" r="2.9" fill="#25231f"/><circle cx="48" cy="20.8" r="1.2" fill="#6a6862"/>
<rect x="90.7" y="25.5" width="12.3" height="8.8" fill="#e3e0d9"/><path d="M94.8 25.5V34.3M99 25.5V34.3" stroke="#bdb8ae" stroke-width="0.6"/>
<rect x="106.5" y="23.5" width="12.5" height="10.8" fill="#dedad2"/><path d="M106.8 34.3L108.3 23.5" stroke="#8d8375" stroke-width="1"/>
<rect x="121.5" y="26" width="7.2" height="8.3" fill="#e3d4b4"/>
<path d="M1.5 52.2C0 47 2 45 2.3 42.5H4.3C4.6 45 6.5 47 5 52.2Z" fill="#e7e3da"/><ellipse cx="9" cy="50.5" rx="2.5" ry="1.7" fill="#ddd8cc"/>
<rect x="18" y="45.2" width="20" height="13" fill="#8f918d"/>
<rect x="42.7" y="41.5" width="8" height="10.7" fill="#b9b2a4"/><path d="M52 41.5L55 52.2" stroke="#d4cfc5" stroke-width="1.6"/>
<rect x="97.3" y="42.2" width="13" height="10" fill="#dedbd3"/><path d="M96.5 52.2L98.5 42.2" stroke="#8a8072" stroke-width="1"/>
<rect x="118" y="41" width="11" height="11.2" fill="#b4aea2"/><path d="M117.3 52.2L119 41" stroke="#7f7669" stroke-width="1"/>
<rect x="85" y="48" width="4.5" height="4.2" fill="#d8c9a4"/>
<rect x="-2" y="56.8" width="41" height="18" fill="#5f584e"/>
<path d="M93 55L102 53.5L103 61H116V64.5H93Z" fill="#3d352d"/><path d="M95 64V73M113 64V73" stroke="#3d352d" stroke-width="1.6"/>
<rect x="121.5" y="62.5" width="8" height="9.5" fill="#cfc6b4"/><rect x="104" y="65" width="8" height="7" fill="#a59b88"/>
<!-- shirt -->
<path d="M53 76C53 66 57 60.5 64 59.5L72 64L82 59.5C93 61 100 66 104 76Z" fill="#e4e2e0"/>
<path d="M82 59.5L93 63L101 73H86Z" fill="#cfd0d4"/>
<path d="M62 52H82V61L72 65L62 61Z" fill="#b48c77"/>
<path d="M56.5 40C56.5 28 62 23 71.5 23S86.5 28 86.5 40C86.5 50 81 62.7 71.5 62.7S56.5 50 56.5 40Z" fill="url(#f5)"/>
<path d="M55 46C50.5 27 59 19.3 71.5 19.3C85 19.3 93 27 88.5 46C88.5 38 87 32 83 29C77 31 66 31.5 60.5 28.5C56.5 32 55.5 38 55 46Z" fill="#2e2a28"/>
</g>
<g filter="url(#b3)" opacity=".8">
<rect x="58.3" y="38" width="12.4" height="8.4" rx="3.2" fill="#c9a994" stroke="#5a4f4b" stroke-width="0.75"/><rect x="74.3" y="38" width="12.4" height="8.4" rx="3.2" fill="#c9a994" stroke="#5a4f4b" stroke-width="0.75"/>
<path d="M70.7 40.3H74.3" stroke="#4e4441" stroke-width="0.8"/>
<path d="M61.5 41.8H67.5M77.5 41.8H83.5" stroke="#3a2f2b" stroke-width="1"/>
<path d="M71.5 44V50.5H74" stroke="#a9836f" stroke-width="0.8" fill="none"/>
<path d="M67.5 55.3C70 54.6 73.5 54.6 76.5 55.3" stroke="#9c6158" stroke-width="1.1" fill="none"/>
</g>
</svg><div class="lab" style="width:52.5px;"><svg viewBox="0 0 11 13"><rect x="3.4" y="0.6" width="4.2" height="7.4" rx="2.1" fill="#e9e9e9"/><path d="M1.4 5.6V6.2A4.1 4.1 0 0 0 9.6 6.2V5.6" stroke="#e9e9e9" stroke-width="1.1" fill="none"/><path d="M5.5 10.3V12.3" stroke="#e9e9e9" stroke-width="1.2"/><path d="M0.6 11.2L10.4 1.2" stroke="#d8453e" stroke-width="1.3"/></svg><span>汪惠怡</span></div></div>
<div style="position:absolute;left:658px;top:458px;width:138px;height:29.4px;overflow:hidden"><div class="tile" style="left:3px;top:3px"><svg class="ph" viewBox="0 0 131 73" preserveAspectRatio="none">
<rect width="131" height="73" fill="#2f2b2a"/>
<g filter="url(#b1)">
<rect x="-2" y="-2" width="70" height="14.5" fill="#4c4644"/>
<rect x="-2" y="-2" width="19" height="14" fill="#5a5553"/>
<g stroke-width="1.3"><path d="M19 12L21 0" stroke="#d9cfc9"/><path d="M22 12L24.5 0" stroke="#8a4a48"/><path d="M25 12L27.5 0" stroke="#e4dbd4"/><path d="M28 12L30 0" stroke="#c9a8a4"/><path d="M31 12L32.5 0" stroke="#e9e1da"/></g>
<rect x="34" y="1.2" width="16.8" height="2.3" fill="#e6d9c4"/><rect x="34.5" y="3.7" width="16" height="2.2" fill="#b5564a"/><rect x="34" y="6.1" width="16.8" height="2.2" fill="#6a978b"/><rect x="34" y="8.5" width="16.8" height="2.6" fill="#e3d6c0"/>
<g stroke-width="1.4"><path d="M52.5 12V0" stroke="#7d3f38"/><path d="M55 12L54.5 0" stroke="#d5c8bf"/><path d="M57.5 12L56.5 0" stroke="#6d3a34"/><path d="M60.5 12L58.5 0" stroke="#c9b9af"/><path d="M64 12L61 0" stroke="#8a4a40"/></g>
<rect x="-2" y="12" width="70" height="2" fill="#231f1e"/>
<g stroke-width="2"><path d="M6 17V26.5" stroke="#cf4030"/><path d="M9.5 19V26.5" stroke="#dcc9a6"/><path d="M1.5 21V26.5" stroke="#b87a4a"/><path d="M17.5 22V26.5" stroke="#8d8a86"/><path d="M21.5 19V26.5" stroke="#c5483a"/><path d="M24.5 20V26.5" stroke="#d9c3a0"/><path d="M28 21V26.5" stroke="#a84438"/><path d="M33 20V26.5" stroke="#c9a27a"/><path d="M36 19.5V26.5" stroke="#d8cbb8"/><path d="M39.5 20V26.5" stroke="#b5503f"/><path d="M42.5 19.5V26.5" stroke="#cfc4b6"/><path d="M46 20V26.5" stroke="#a9a39c"/></g>
<rect x="50" y="22.5" width="2.2" height="2.2" fill="#e8c44a"/>
<rect x="53" y="19" width="10" height="1.6" fill="#d9d6d0"/><rect x="52" y="21.3" width="12" height="1.6" fill="#a9a6a1"/><rect x="53" y="23.6" width="11" height="2.4" fill="#e2dfd9"/>
<rect x="65" y="-2" width="68" height="17" fill="#7f4136"/>
<path d="M65 3H131M65 7.3H131M65 11.6H131" stroke="#5e3028" stroke-width="0.8"/>
<rect x="88" y="14" width="45" height="2.2" fill="#38292a"/>
<rect x="100" y="16" width="33" height="13" fill="#5469b8"/><path d="M108 20C114 17.5 122 22.5 133 19V28H104Z" fill="#c3d1ee"/>
<path d="M63 27C61.5 14 66 3.5 78 3C87 2.6 92.5 7 92.5 14L86 27Z" fill="#2d362f"/>
<path d="M67 14C70 7 78 4.5 88 7.5C82 7 73 9.5 69.5 16Z" fill="#6f7866"/>
<path d="M70 27C70 22.5 73 19 78 17L83.5 9C87.5 7.3 92 9 95 12C101 15 107 21 110 27Z" fill="#d9b598"/>
<path d="M72 23.5C78 18.5 86 17.5 93 20M71 26.3C77 22 85 21 92 23.5M79 16.5C82 14 85 13.5 88 14.5" stroke="#9c7358" stroke-width="0.9" fill="none"/>
</g>
</svg></div></div>
</div>
</body>
</html>
